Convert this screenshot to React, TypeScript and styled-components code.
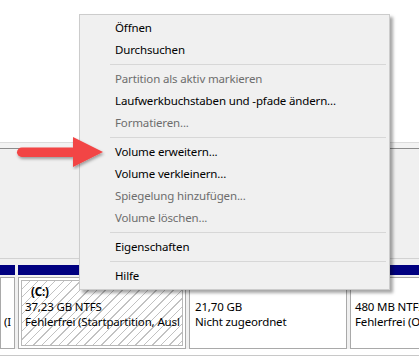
import { createGlobalStyle, styled } from 'styled-components';

const GlobalStyle = createGlobalStyle`
  html, body {
    margin: 0;
    padding: 0;
    background: #ffffff;
  }
  body {
    font-family: 'Noto Sans', 'Liberation Sans', sans-serif;
    font-size: 11.5px;
    letter-spacing: -0.15px;
    color: #000000;
  }
`;

type MenuEntry =
  | { kind: 'item'; label: string; disabled?: boolean }
  | { kind: 'sep' };

const menuEntries: MenuEntry[] = [
  { kind: 'item', label: 'Öffnen' },
  { kind: 'item', label: 'Durchsuchen' },
  { kind: 'sep' },
  { kind: 'item', label: 'Partition als aktiv markieren', disabled: true },
  { kind: 'item', label: 'Laufwerkbuchstaben und -pfade ändern...' },
  { kind: 'item', label: 'Formatieren...', disabled: true },
  { kind: 'sep' },
  { kind: 'item', label: 'Volume erweitern...' },
  { kind: 'item', label: 'Volume verkleinern...' },
  { kind: 'item', label: 'Spiegelung hinzufügen...', disabled: true },
  { kind: 'item', label: 'Volume löschen...', disabled: true },
  { kind: 'sep' },
  { kind: 'item', label: 'Eigenschaften' },
  { kind: 'sep' },
  { kind: 'item', label: 'Hilfe' },
];

interface IPartition {
  width: number;
  lines: string[];
  selected?: boolean;
  pad: number;
}

// 가장 왼쪽 칸은 잘려서 텍스트가 더 왼쪽에 붙어 있음
const partitions: IPartition[] = [
  { width: 15, lines: ['', '', '(I'], pad: 0 },
  {
    width: 168,
    lines: ['(C:)', '37,23 GB NTFS', 'Fehlerfrei (Startpartition, Ausl'],
    selected: true,
    pad: 3,
  },
  { width: 158, lines: ['', '21,70 GB', 'Nicht zugeordnet'], pad: 2 },
  { width: 120, lines: ['', '480 MB NTFS', 'Fehlerfrei (OEM-Partition)'], pad: 1 },
];

function App() {
  return (
    <>
      <GlobalStyle />
      <Screen>
        <TopPane />
        <Splitter />
        <LowerPane>
          <DiskRow>
            {partitions.map((p, i) => (
              <PartitionCol key={i} style={{ width: p.width }}>
                <PartitionHeader />
                <PartitionBody>
                  <PartitionInner $selected={p.selected} $pad={p.pad}>
                    {p.lines.map((line, j) => (
                      <PartitionLine key={j} $bold={p.selected && j === 0}>
                        {line || '\u00a0'}
                      </PartitionLine>
                    ))}
                  </PartitionInner>
                </PartitionBody>
              </PartitionCol>
            ))}
          </DiskRow>
        </LowerPane>
        <BottomStrip />

        <ContextMenu>
          {menuEntries.map((entry, i) =>
            entry.kind === 'sep' ? (
              <Separator key={i} />
            ) : (
              <MenuItem key={i} $disabled={entry.disabled}>
                {entry.label}
              </MenuItem>
            )
          )}
        </ContextMenu>

        <Arrow width="110" height="40" viewBox="0 0 110 40">
          <defs>
            <filter id="arrowShadow" x="-20%" y="-40%" width="140%" height="180%">
              <feDropShadow dx="1" dy="2" stdDeviation="1.6" floodColor="#000" floodOpacity="0.35" />
            </filter>
          </defs>
          <g filter="url(#arrowShadow)" fill="#f24444">
            <rect x="17" y="17.5" width="60" height="9.5" rx="4.75" />
            <path d="M73 7 L103 22 L73 37 Z" />
          </g>
        </Arrow>
      </Screen>
    </>
  );
}

const Screen = styled.div`
  position: relative;
  width: 419px;
  height: 356px;
  overflow: hidden;
  display: flex;
  flex-direction: column;
  background: #ffffff;
`;

const TopPane = styled.div`
  height: 143px;
  background: #ffffff;
`;

const Splitter = styled.div`
  height: 5px;
  background: #f3f3f3;
  border-top: 1px solid #dcdcdc;
  border-bottom: 1px solid #8c8c8c;
`;

const LowerPane = styled.div`
  height: 201px;
  background: #f0f0f0;
  display: flex;
  flex-direction: column;
  justify-content: flex-end;
`;

const DiskRow = styled.div`
  display: flex;
  gap: 3px;
  border-top: 1px solid #d2d2d2;
  padding-top: 6px;
`;

const PartitionCol = styled.div`
  flex-shrink: 0;
  display: flex;
  flex-direction: column;
  gap: 2px;
`;

const PartitionHeader = styled.div`
  height: 10px;
  background: #000080;
`;

const PartitionBody = styled.div`
  height: 72px;
  box-sizing: border-box;
  border: 1px solid #a9a9a9;
  background: #ffffff;
  padding: 2px;
  overflow: hidden;
`;

const PartitionInner = styled.div<{ $selected?: boolean; $pad: number }>`
  height: 100%;
  box-sizing: border-box;
  padding: 3px 0 0 ${({ $pad }) => $pad}px;
  border: 1px solid ${({ $selected }) => ($selected ? '#b8b8b8' : 'transparent')};
  background: ${({ $selected }) =>
    $selected
      ? 'repeating-linear-gradient(135deg, #ffffff 0 5px, #c2c2c2 5px 6px)'
      : '#ffffff'};
  white-space: nowrap;
  overflow: hidden;
`;

const PartitionLine = styled.div<{ $bold?: boolean }>`
  height: 15px;
  line-height: 15px;
  font-weight: ${({ $bold }) => ($bold ? 700 : 400)};
  padding-left: ${({ $bold }) => ($bold ? '6px' : '0')};
`;

const BottomStrip = styled.div`
  flex: 1;
  background: #f0f0f0;
  border-top: 1px solid #c8c8c8;
  margin-top: 6px;
`;

const ContextMenu = styled.div`
  position: absolute;
  left: 79px;
  top: 14px;
  width: 311px;
  box-sizing: border-box;
  padding: 2px;
  background: #f0f0f0;
  border: 1px solid #cccccc;
  box-shadow: 3px 3px 3px rgba(0, 0, 0, 0.35);
  display: flex;
  flex-direction: column;
`;

const MenuItem = styled.div<{ $disabled?: boolean }>`
  height: 22px;
  line-height: 22px;
  padding-left: 33px;
  white-space: nowrap;
  color: ${({ $disabled }) => ($disabled ? '#6d6d6d' : '#000000')};
`;

const Separator = styled.div`
  height: 1px;
  margin: 3px 1px 3px 28px;
  background: #d7d7d7;
`;

const Arrow = styled.svg`
  position: absolute;
  left: 0;
  top: 130px;
`;

export default App;
